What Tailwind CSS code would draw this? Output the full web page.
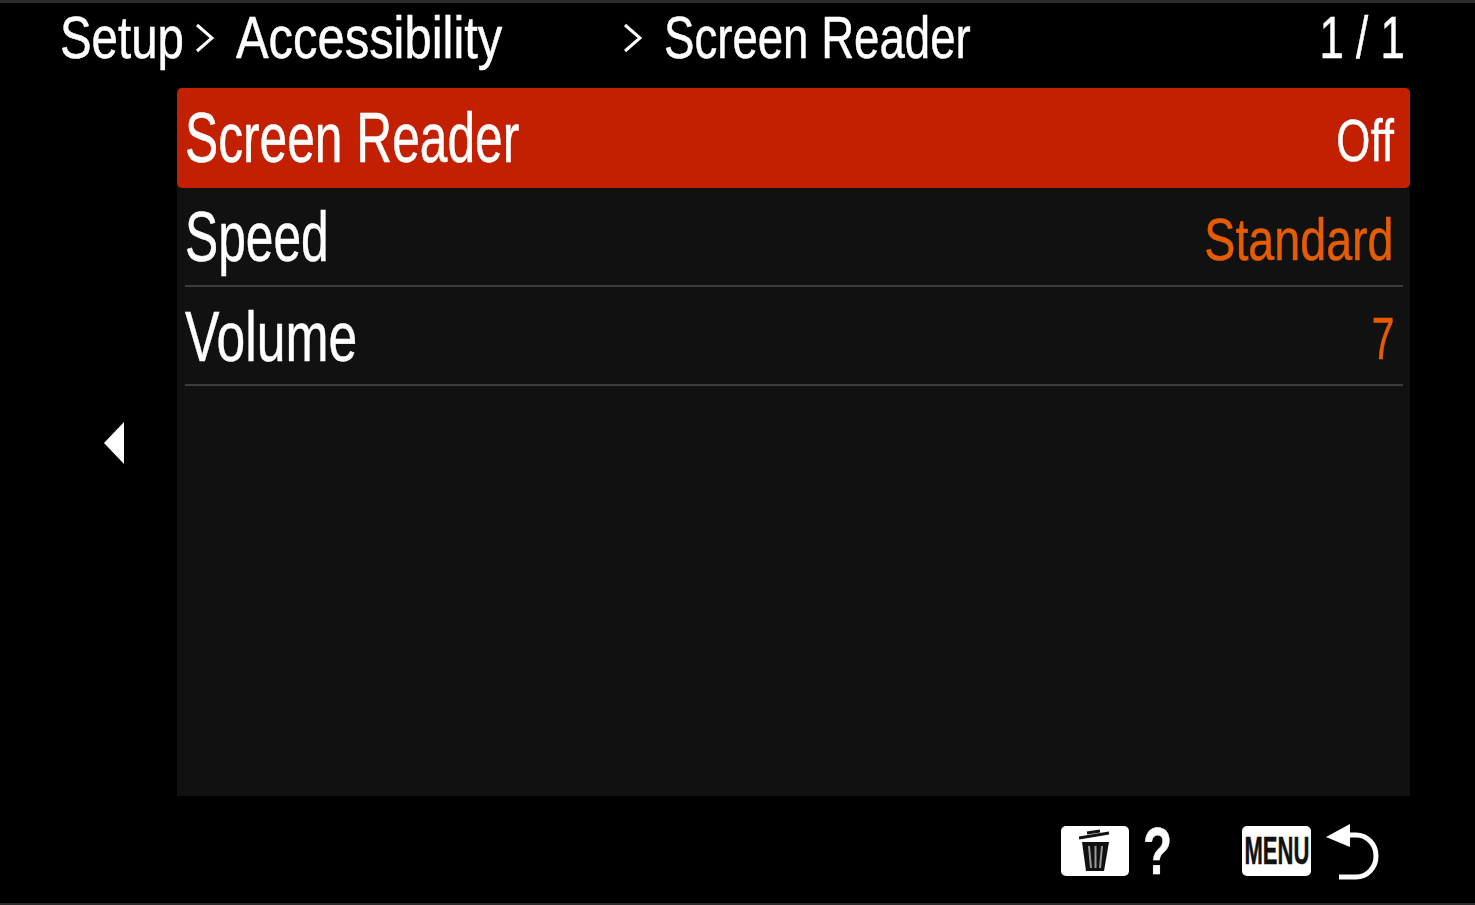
<!DOCTYPE html>
<html lang="en">
<head>
  <meta charset="UTF-8">
  <title>Screen Reader</title>
  <script src="https://cdn.jsdelivr.net/npm/@tailwindcss/browser@4"></script>
</head>
<body class="bg-black">
  <div class="w-[1475px] h-[905px] overflow-hidden flex flex-col bg-black text-white font-['Liberation_Sans',sans-serif] [-webkit-text-stroke:0.5px]">
    <div class="h-[3px] bg-[#2b2b2b]"></div>

    <!-- header -->
    <div class="h-[85px] flex items-center pl-[60px] pr-[70px] text-[60px] leading-none pb-[15px] whitespace-nowrap">
      <span class="w-[123px] origin-left scale-x-[0.79]">Setup</span>
      <svg class="w-[20px] h-[32px] ml-[12px]" viewBox="0 0 20 32" fill="none" stroke="#fff" stroke-width="3"><path d="M2 3l15 13L2 29"/></svg>
      <span class="ml-[21px] w-[267px] origin-left scale-x-[0.815]">Accessibility</span>
      <svg class="w-[20px] h-[32px] ml-[120px]" viewBox="0 0 20 32" fill="none" stroke="#fff" stroke-width="3"><path d="M2 3l15 13L2 29"/></svg>
      <span class="ml-[21px] origin-left scale-x-[0.76]">Screen Reader</span>
      <span class="ml-auto origin-right scale-x-[0.73]">1 / 1</span>
    </div>

    <div class="flex h-[708px]">
      <div class="w-[177px] flex items-center justify-end pr-[53px] pt-[2px]">
        <svg class="w-[20px] h-[42px]" viewBox="0 0 20 42" fill="#fff"><path d="M20 0v42L0 21z"/></svg>
      </div>
      <div class="w-[1233px] bg-[#111111] text-[70px] leading-none whitespace-nowrap">
        <div class="h-[100px] bg-[#c22000] rounded-[5px] flex items-center justify-between pl-[8px] pr-[16px]">
          <span class="origin-left scale-x-[0.71]">Screen Reader</span>
          <span class="origin-right scale-x-[0.73] text-[60px] pt-[6px]">Off</span>
        </div>
        <div class="h-[99px] ml-[8px] mr-[7px] border-b-2 border-[#3c3c3c] flex items-center justify-between pr-[9px]">
          <span class="origin-left scale-x-[0.71]">Speed</span>
          <span class="origin-right scale-x-[0.777] text-[#e65c00] text-[60px] pt-[6px]">Standard</span>
        </div>
        <div class="h-[99px] ml-[8px] mr-[7px] border-b-2 border-[#3c3c3c] flex items-center justify-between pr-[9px]">
          <span class="origin-left scale-x-[0.737] pt-[2px]">Volume</span>
          <span class="origin-right scale-x-[0.68] text-[#e65c00] text-[60px] pt-[6px]">7</span>
        </div>
      </div>
    </div>

    <!-- footer -->
    <div class="flex-1 flex items-start pl-[1061px] pt-[30px] whitespace-nowrap">
      <div class="w-[68px] h-[50px] bg-white rounded-[5px] flex items-center justify-center">
        <svg class="w-[32px] h-[44px]" viewBox="0 0 32 44" fill="none">
          <path d="M3 13l4 29h18l5-29z" fill="#111"/>
          <path d="M10 17l2 22M16.500 17v22M23 17l-2 22" stroke="#9a9a9a" stroke-width="2"/>
          <path d="M0 9L30 4M8 4L21 2" stroke="#111" stroke-width="3"/>
        </svg>
      </div>
      <span class="ml-[14px] w-[25px] text-[66px] leading-[51px] font-bold origin-left scale-x-[0.72]">?</span>
      <div class="ml-[74px] w-[69px] h-[50px] bg-white rounded-[5px] flex items-center justify-center text-[#111] text-[38px] leading-none font-bold">
        <span class="shrink-0 scale-x-[0.58]">MENU</span>
      </div>
      <svg class="ml-[13px] -mt-[4px] w-[56px] h-[58px]" viewBox="0 0 56 58" fill="none">
        <path d="M2 15L26 2v23z" fill="#fff"/>
        <path d="M24 13h8c11 0 20 9 20 21s-9 21-20 21H15" stroke="#fff" stroke-width="5"/>
      </svg>
    </div>
    <div class="h-[2px] bg-[#2b2b2b]"></div>
  </div>
</body>
</html>
